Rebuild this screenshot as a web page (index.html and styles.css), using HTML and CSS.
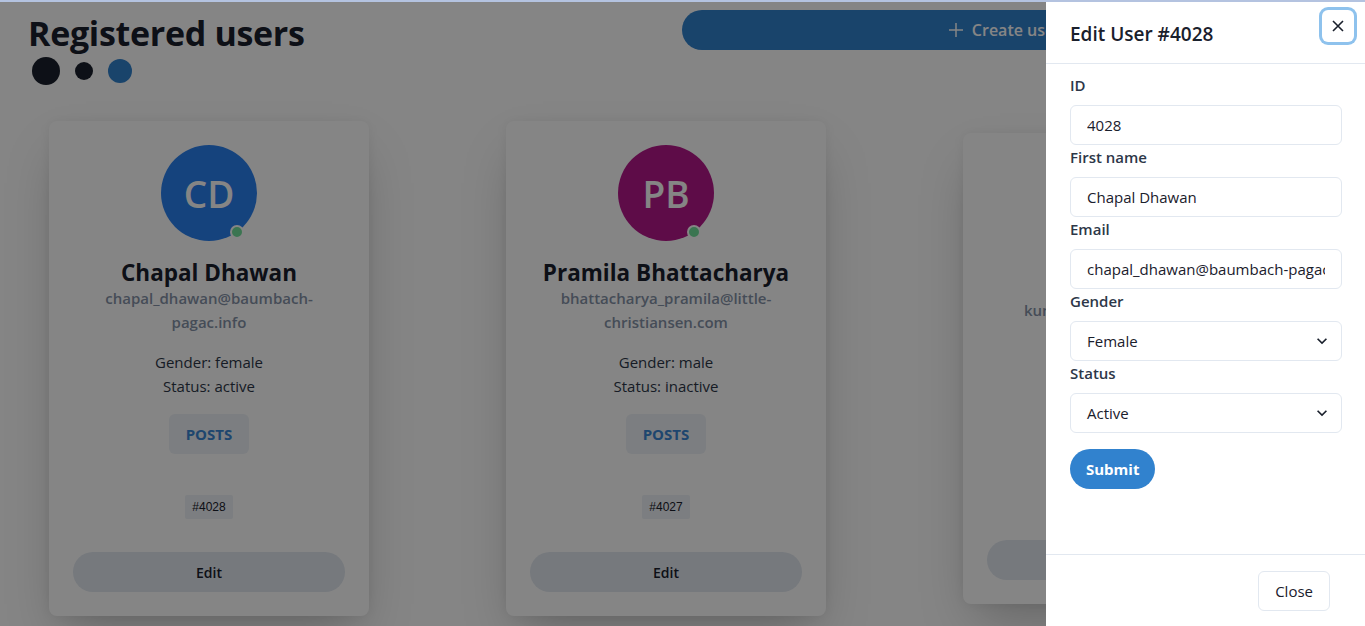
FILE: index.html
```html
<!DOCTYPE html>
<html lang="en">
<head>
<meta charset="utf-8">
<title>Registered users</title>
<link rel="stylesheet" href="styles.css">
</head>
<body>
<div class="topline"></div>
<main class="page">
  <header class="page-head">
    <div class="title-wrap">
      <h1 class="title">Registered users</h1>
      <div class="dots">
        <span class="dot dot-lg"></span>
        <span class="dot dot-sm"></span>
        <span class="dot dot-md"></span>
      </div>
    </div>
    <button class="create-btn">
      <svg class="plus" viewBox="0 0 16 16" width="16" height="16"><path d="M8 1v14M1 8h14" stroke="currentColor" stroke-width="1.5" fill="none"/></svg>
      <span>Create user</span>
    </button>
  </header>

  <section class="cards">
    <article class="card">
      <div class="avatar av-blue">CD<span class="badge"></span></div>
      <h2 class="name">Chapal Dhawan</h2>
      <p class="email">chapal_dhawan@baumbach-pagac.info</p>
      <p class="meta">Gender: female<br>Status: active</p>
      <button class="posts-btn">POSTS</button>
      <span class="tag">#4028</span>
      <button class="edit-btn">Edit</button>
    </article>
    <article class="card">
      <div class="avatar av-magenta">PB<span class="badge"></span></div>
      <h2 class="name">Pramila Bhattacharya</h2>
      <p class="email">bhattacharya_pramila@little-christiansen.com</p>
      <p class="meta">Gender: male<br>Status: inactive</p>
      <button class="posts-btn">POSTS</button>
      <span class="tag">#4027</span>
      <button class="edit-btn">Edit</button>
    </article>
    <article class="card">
      <div class="avatar av-teal">KJ<span class="badge"></span></div>
      <h2 class="name">Kumar Jain</h2>
      <p class="email">kumar_jain@lehner.biz.info</p>
      <p class="meta">Gender: male<br>Status: active</p>
      <button class="posts-btn">POSTS</button>
      <span class="tag">#4026</span>
      <button class="edit-btn">Edit</button>
    </article>
  </section>
</main>

<div class="overlay"></div>

<aside class="drawer">
  <header class="drawer-head">
    <h3 class="drawer-title">Edit User #4028</h3>
    <button class="close-x" aria-label="Close">
      <svg viewBox="0 0 12 12" width="12" height="12"><path d="M1 1l10 10M11 1L1 11" stroke="currentColor" stroke-width="1.6" fill="none"/></svg>
    </button>
  </header>
  <form class="drawer-body">
    <label class="field-label">ID</label>
    <input class="field" type="text" value="4028">
    <label class="field-label">First name</label>
    <input class="field" type="text" value="Chapal Dhawan">
    <label class="field-label">Email</label>
    <input class="field" type="text" value="chapal_dhawan@baumbach-pagac.info">
    <label class="field-label">Gender</label>
    <div class="select">
      <span>Female</span>
      <svg viewBox="0 0 24 24" width="20" height="20"><path d="M16.59 8.59L12 13.17 7.41 8.59 6 10l6 6 6-6z" fill="currentColor"/></svg>
    </div>
    <label class="field-label">Status</label>
    <div class="select">
      <span>Active</span>
      <svg viewBox="0 0 24 24" width="20" height="20"><path d="M16.59 8.59L12 13.17 7.41 8.59 6 10l6 6 6-6z" fill="currentColor"/></svg>
    </div>
    <button type="button" class="submit-btn">Submit</button>
  </form>
  <footer class="drawer-foot">
    <button class="close-btn">Close</button>
  </footer>
</aside>
</body>
</html>
```

FILE: styles.css
```css
* { box-sizing: border-box; }
html, body { margin: 0; height: 100%; }
body {
  font-family: "Open Sans", "Noto Sans", sans-serif;
  color: #1a202c;
  background: #ffffff;
  overflow: hidden;
  position: relative;
}
button { font-family: inherit; border: 0; cursor: pointer; }

.topline {
  position: fixed; left: 0; top: 0; right: 0; height: 2px;
  background: #b4c3e0; z-index: 30;
}

.page { padding: 10px 38px 0 28px; }
.page-head { display: flex; justify-content: space-between; align-items: flex-start; }
.title-wrap { padding-top: 2px; }
.title { margin: 0; font-size: 34px; font-weight: 700; line-height: 43px; letter-spacing: -0.3px; }
.dots { display: flex; align-items: center; gap: 15px; margin: 2px 0 0 4px; height: 28px; }
.dot { display: block; border-radius: 50%; background: #1a202c; }
.dot-lg { width: 28px; height: 28px; }
.dot-sm { width: 18px; height: 18px; }
.dot-md { width: 24px; height: 24px; background: #3182ce; }

.create-btn {
  width: 645px; height: 40px; border-radius: 9999px;
  background: #3182ce; color: #fff;
  display: flex; align-items: center; justify-content: center; gap: 8px;
  font-size: 16px; font-weight: 600;
}
.plus { display: block; }

.cards {
  display: flex; align-items: center; gap: 137px;
  margin-top: 36px; padding-left: 21px;
}
.card {
  flex: 0 0 320px; width: 320px; padding: 24px;
  background: #fff; border-radius: 8px;
  box-shadow: 0 25px 50px -12px rgba(0,0,0,0.25), 0 0 12px rgba(0,0,0,0.06);
  display: flex; flex-direction: column; align-items: center; text-align: center;
}
.avatar {
  position: relative; width: 96px; height: 96px; border-radius: 50%;
  color: #fff; font-size: 37px; font-weight: 600;
  display: flex; align-items: center; justify-content: center;
}
.av-blue { background: #2a80f0; }
.av-magenta { background: #b5188a; }
.av-teal { background: #2c7a7b; }
.badge {
  position: absolute; left: 69px; top: 80px; width: 14px; height: 14px;
  border-radius: 50%; background: #72e09c; border: 2px solid #fff;
}
.name { margin: 19px 0 0; font-size: 22.5px; font-weight: 700; line-height: 26px; }
.email { margin: 0; font-size: 15px; font-weight: 600; line-height: 24px; color: #8593a8; }
.meta { margin: 16px 0 0; font-size: 15px; line-height: 24px; color: #2d3748; }
.posts-btn {
  margin-top: 16px; width: 80px; height: 40px; border-radius: 6px;
  background: #edf2f7; color: #3b86d4; font-size: 15px; font-weight: 700;
}
.tag {
  margin-top: 41px; height: 24px; padding: 0 7.5px; border-radius: 2px;
  background: #edf2f7; color: #1a202c;
  font-family: "Liberation Sans", Arial, sans-serif; font-size: 12px; line-height: 24px;
}
.edit-btn {
  margin-top: 33px; width: 272px; height: 40px; border-radius: 9999px;
  background: #e2e8f0; color: #1a202c; font-size: 14px; font-weight: 600;
}

.overlay {
  position: fixed; inset: 0; background: rgba(0,0,0,0.48); z-index: 10;
}

.drawer {
  position: fixed; top: 0; right: 0; bottom: 0; width: 319px;
  background: #fff; z-index: 20;
  display: flex; flex-direction: column;
}
.drawer-head {
  position: relative; padding: 19px 23px 14px 24px; border-bottom: 1px solid #e2e8f0;
}
.drawer-title { margin: 0; font-size: 19px; font-weight: 600; line-height: 30px; }
.close-x {
  position: absolute; top: 10px; right: 11px; width: 32px; height: 32px;
  border-radius: 6px; background: transparent; color: #1a202c;
  display: flex; align-items: center; justify-content: center;
  box-shadow: 0 0 0 3px rgba(66,153,225,0.6);
}
.close-x svg { display: block; }
.drawer-body { flex: 1; padding: 9px 23px 8px 24px; display: flex; flex-direction: column; align-items: stretch; }
.field-label { font-size: 15px; font-weight: 600; line-height: 24px; margin-bottom: 8px; display: block; color: #2d3748; }
.field, .select {
  height: 40px; width: 100%; border: 1px solid #e2e8f0; border-radius: 6px;
  padding: 0 16px; font-family: inherit; font-size: 15px; color: #1a202c; background: #fff;
}
.select { display: flex; align-items: center; justify-content: space-between; padding-right: 9px; }
.select svg { display: block; color: #1a202c; }
.submit-btn {
  margin-top: 16px; align-self: flex-start; height: 40px; padding: 0 16px; border-radius: 9999px;
  background: #3182ce; color: #fff; font-size: 15px; font-weight: 700;
}
.drawer-foot {
  border-top: 1px solid #e2e8f0; padding: 16px 23px 15px 24px; display: flex; justify-content: flex-end;
}
.close-btn {
  margin-right: 12px; height: 40px; padding: 0 16px; border-radius: 6px;
  background: #fff; border: 1px solid #e2e8f0; color: #1a202c; font-size: 15px; font-weight: 500;
}
```
